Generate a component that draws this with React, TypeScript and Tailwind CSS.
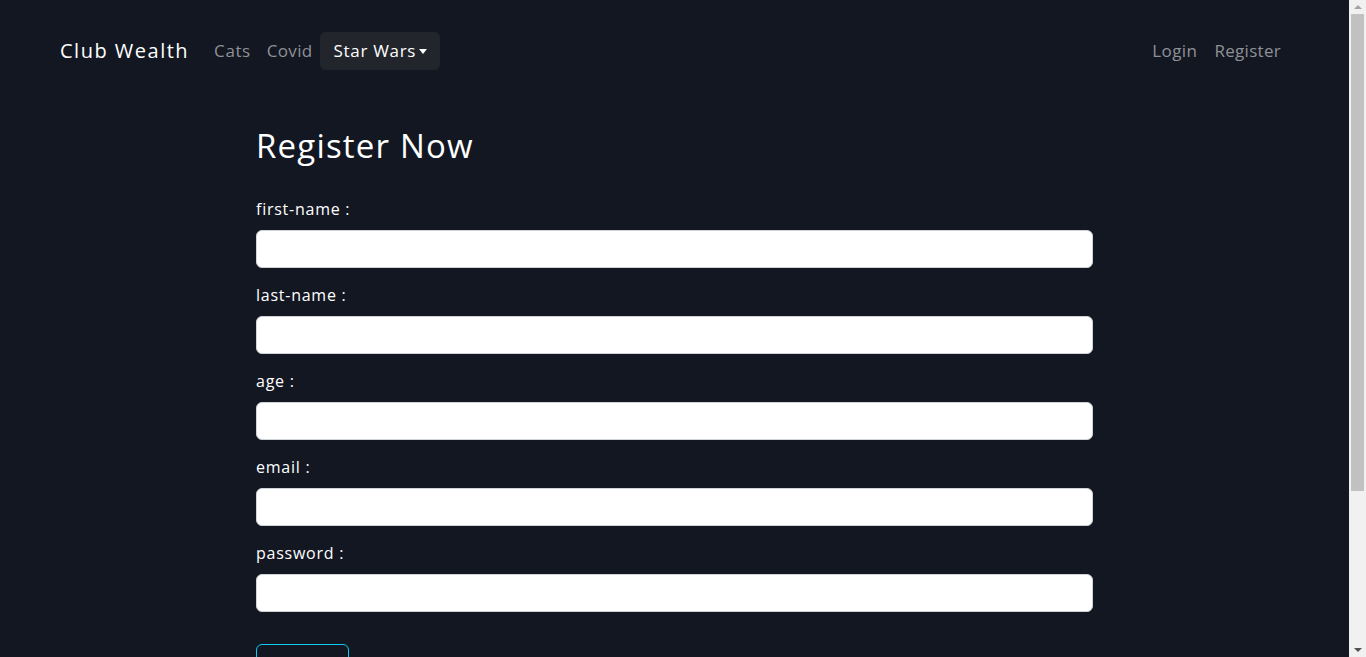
import React from "react";

const fields = ["first-name", "last-name", "age", "email", "password"];

function Scrollbar() {
  return (
    <div className="w-[17px] h-[657px] bg-[#f1f1f1] flex flex-col items-center shrink-0">
      <div className="h-[14px] w-full flex items-center justify-center">
        <span className="w-0 h-0 border-l-[4px] border-r-[4px] border-b-[4px] border-l-transparent border-r-transparent border-b-[#a3a3a3]" />
      </div>
      <div className="w-[13px] h-[477px] bg-[#c1c1c1]" />
      <div className="flex-1" />
      <div className="h-[14px] w-full flex items-center justify-center">
        <span className="w-0 h-0 border-l-[4px] border-r-[4px] border-t-[4px] border-l-transparent border-r-transparent border-t-[#505050]" />
      </div>
    </div>
  );
}

export default function App() {
  return (
    <div className="flex h-[657px] overflow-hidden bg-[#131722]">
      <div
        className="flex-1 min-w-0 text-white"
        style={{ fontFamily: '"Open Sans", "Noto Sans", sans-serif' }}
      >
        <nav className="flex items-center h-[102px] pl-[60px] pr-[68px]">
          <span className="text-[20px] text-white mr-[25px] tracking-[1.5px]">Club Wealth</span>
          <a className="text-[17px] text-[#8e9196] mr-[16px] tracking-[0.6px]">Cats</a>
          <a className="text-[17px] text-[#8e9196] mr-[8px] tracking-[0.3px]">Covid</a>
          <button className="flex items-center h-[38px] pl-[13px] pr-[13px] rounded-[6px] bg-[#22262c] text-[17px] text-white tracking-[0.7px]">
            Star Wars
            <span className="ml-[3px] w-0 h-0 border-l-[4.5px] border-r-[4.5px] border-t-[5px] border-l-transparent border-r-transparent border-t-white" />
          </button>
          <div className="ml-auto flex items-center gap-[17px]">
            <a className="text-[17px] text-[#8e9196] tracking-[0.4px]">Login</a>
            <a className="text-[17px] text-[#8e9196] tracking-[0.3px]">Register</a>
          </div>
        </nav>
        <main className="ml-[256px] w-[837px] pt-[24px]">
          <h1 className="text-[33px] leading-[40px] font-normal mb-[31px] tracking-[1.2px]">Register Now</h1>
          <div className="flex flex-col gap-[15px]">
            {fields.map((f) => (
              <div key={f} className="flex flex-col">
                <label className="text-[16px] leading-[24px] mb-[9px] tracking-[0.75px]">{f} :</label>
                <input className="h-[38px] w-full rounded-[6px] bg-white border border-[#ced4da]" />
              </div>
            ))}
          </div>
          <button className="mt-[32px] h-[38px] px-[12px] rounded-[6px] border border-[#0dcaf0] text-[#0dcaf0] text-[16px] tracking-[0.8px]">
            Register
          </button>
        </main>
      </div>
      <Scrollbar />
    </div>
  );
}
